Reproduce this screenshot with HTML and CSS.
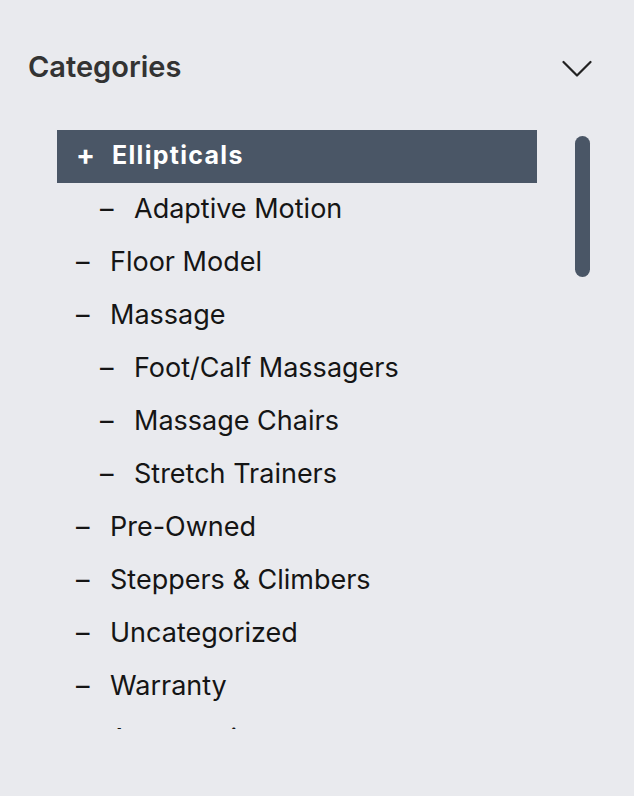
FILE: index.html
```html
<!DOCTYPE html>
<html>
<head>
<meta charset="utf-8">
<link rel="stylesheet" href="styles.css">
</head>
<body>
<div class="panel">
  <div class="header">
    <h2 class="title">Categories</h2>
    <svg class="chev" width="30" height="18" viewBox="0 0 30 18"><path d="M1.5 2 L15 15.5 L28.5 2" fill="none" stroke="#222" stroke-width="2.2" stroke-linecap="round" stroke-linejoin="round"/></svg>
  </div>
  <div class="body">
    <div class="viewport">
      <ul class="list">
        <li class="item active"><span class="mark">+</span><span class="label">Ellipticals</span></li>
        <li class="item sub"><span class="mark">–</span><span class="label">Adaptive Motion</span></li>
        <li class="item"><span class="mark">–</span><span class="label">Floor Model</span></li>
        <li class="item"><span class="mark">–</span><span class="label">Massage</span></li>
        <li class="item sub"><span class="mark">–</span><span class="label">Foot/Calf Massagers</span></li>
        <li class="item sub"><span class="mark">–</span><span class="label">Massage Chairs</span></li>
        <li class="item sub"><span class="mark">–</span><span class="label">Stretch Trainers</span></li>
        <li class="item"><span class="mark">–</span><span class="label">Pre-Owned</span></li>
        <li class="item"><span class="mark">–</span><span class="label">Steppers &amp; Climbers</span></li>
        <li class="item"><span class="mark">–</span><span class="label">Uncategorized</span></li>
        <li class="item"><span class="mark">–</span><span class="label">Warranty</span></li>
        <li class="item"><span class="mark">–</span><span class="label">Accessories</span></li>
      </ul>
    </div>
    <div class="track"><div class="thumb"></div></div>
  </div>
</div>
</body>
</html>
```
FILE: styles.css
```css
html, body {
  margin: 0;
  padding: 0;
  background: #e9eaee;
  height: 100%;
}
body {
  font-family: Inter, "Noto Sans", sans-serif;
  color: #151515;
}
.panel {
  padding: 46px 42px 0 28px;
}
.header {
  display: flex;
  align-items: center;
  justify-content: space-between;
  height: 40px;
}
.title {
  margin: 0;
  font-size: 29px;
  font-weight: 600;
  color: #333;
}
.chev {
  margin-top: 6px;
}
.body {
  display: flex;
  margin-top: 44px;
  padding-left: 29px;
}
.viewport {
  width: 480px;
  height: 599px;
  overflow: hidden;
}
.list {
  list-style: none;
  margin: 0;
  padding: 0;
}
.item {
  box-sizing: border-box;
  display: flex;
  align-items: center;
  height: 53px;
  font-size: 27px;
  padding-left: 19px;
  padding-bottom: 2px;
}
.item .mark {
  width: 34px;
  flex: none;
}
.item.sub {
  padding-left: 43px;
}
.item.active {
  background: #4a5666;
  color: #fff;
  font-size: 25px;
  font-weight: 700;
  letter-spacing: 1.3px;
  padding-left: 19px;
  padding-bottom: 3px;
}
.item.active .mark {
  width: 36px;
  font-size: 28px;
  letter-spacing: 0;
}
.track {
  margin-left: 38px;
  padding-top: 6px;
}
.thumb {
  width: 15px;
  height: 141px;
  border-radius: 8px;
  background: #4a5666;
}
```
